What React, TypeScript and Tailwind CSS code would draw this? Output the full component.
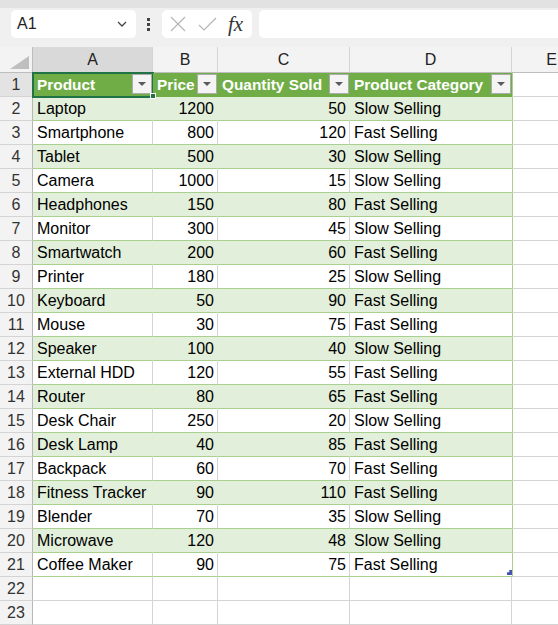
import { ReactNode } from 'react';

type Row = [string, number, number, string];

const rows: Row[] = [
    ['Laptop', 1200, 50, 'Slow Selling'],
    ['Smartphone', 800, 120, 'Fast Selling'],
    ['Tablet', 500, 30, 'Slow Selling'],
    ['Camera', 1000, 15, 'Slow Selling'],
    ['Headphones', 150, 80, 'Fast Selling'],
    ['Monitor', 300, 45, 'Slow Selling'],
    ['Smartwatch', 200, 60, 'Fast Selling'],
    ['Printer', 180, 25, 'Slow Selling'],
    ['Keyboard', 50, 90, 'Fast Selling'],
    ['Mouse', 30, 75, 'Fast Selling'],
    ['Speaker', 100, 40, 'Slow Selling'],
    ['External HDD', 120, 55, 'Fast Selling'],
    ['Router', 80, 65, 'Fast Selling'],
    ['Desk Chair', 250, 20, 'Slow Selling'],
    ['Desk Lamp', 40, 85, 'Fast Selling'],
    ['Backpack', 60, 70, 'Fast Selling'],
    ['Fitness Tracker', 90, 110, 'Fast Selling'],
    ['Blender', 70, 35, 'Slow Selling'],
    ['Microwave', 120, 48, 'Slow Selling'],
    ['Coffee Maker', 90, 75, 'Fast Selling'],
];

const FilterButton = () => (
    <div className="absolute right-[1px] top-[1px] flex h-[20px] w-[20px] items-center justify-center border border-[#ababab] bg-[#f4f4f4]">
        <div className="h-0 w-0 border-x-[4px] border-t-[4px] border-x-transparent border-t-[#5a5a5a]" />
    </div>
);

const RowHead = ({ n, selected }: { n: number; selected?: boolean }) => (
    <div
        className={`flex h-[24px] items-center justify-center border-b border-r border-b-[#d4d4d4] border-r-[#b8b8b8] text-[#333] ${
            selected ? 'bg-[#e3e3e3]' : 'bg-[#f3f3f3]'
        }`}
    >
        {n}
    </div>
);

const HeadCell = ({ children, first }: { children: ReactNode; first?: boolean }) => (
    <div className="relative flex h-[24px] items-center border-b border-b-[#70ad47] bg-[#70ad47] pl-[4px] text-[15.4px] font-bold text-white">
        {children}
        <FilterButton />
        {first && (
            <>
                <div className="pointer-events-none absolute -left-[1px] -top-[1px] h-[26px] w-[122px] border-2 border-[#217346]" />
                <div className="absolute -bottom-[3px] right-[-3px] z-10 h-[6px] w-[6px] border border-white bg-[#217346]" />
            </>
        )}
    </div>
);

const App = () => {
    const cols = ['A', 'B', 'C', 'D', 'E'];

    return (
        <div className="h-[625px] w-[558px] overflow-hidden bg-white font-['Liberation_Sans',Arial,sans-serif] text-[16px] text-black">
            {/* formula bar */}
            <div className="h-[8px] bg-[#e2e2e2]" />
            <div className="flex h-[39px] items-start bg-[#f0f0f0] pt-[2px]">
                <div className="ml-[11px] flex h-[28px] w-[125px] items-center justify-between rounded-[5px] bg-white pl-[6px] pr-[9px] text-[#222]">
                    <span>A1</span>
                    <svg width="10" height="6" viewBox="0 0 10 6">
                        <path d="M1 1l4 4 4-4" fill="none" stroke="#444" strokeWidth="1.3" />
                    </svg>
                </div>
                <div className="ml-[11px] flex h-[28px] flex-col items-center justify-center gap-[2px]">
                    <span className="h-[3px] w-[3px] bg-[#444]" />
                    <span className="h-[3px] w-[3px] bg-[#444]" />
                    <span className="h-[3px] w-[3px] bg-[#444]" />
                </div>
                <div className="ml-[12px] flex h-[28px] w-[90px] items-center rounded-[5px] bg-white pl-[8px]">
                    <svg width="16" height="16" viewBox="0 0 16 16">
                        <path d="M1 1l14 14M15 1L1 15" stroke="#b5b5b5" strokeWidth="1.2" />
                    </svg>
                    <svg className="ml-[12px]" width="19" height="15" viewBox="0 0 19 15">
                        <path d="M1 8l5 5L18 1" fill="none" stroke="#b5b5b5" strokeWidth="1.2" />
                    </svg>
                    <span className="ml-[11px] font-['Liberation_Serif',serif] text-[21px] italic leading-none text-[#333]">
                        fx
                    </span>
                </div>
                <div className="ml-[7px] h-[28px] flex-1 rounded-l-[5px] bg-white" />
            </div>

            {/* grid */}
            <div className="grid grid-cols-[33px_120px_65px_132px_162px_80px]">
                <div className="relative h-[26px] border-b border-r border-b-[#bdbdbd] border-r-[#bdbdbd] bg-[#f3f3f3]">
                    <div className="absolute bottom-[3px] right-[3px] h-0 w-0 border-b-[13px] border-l-[19px] border-b-[#bfbfbf] border-l-transparent" />
                </div>
                {cols.map((c, i) => (
                    <div
                        key={c}
                        className={`flex h-[26px] items-center justify-center border-b border-r border-b-[#bdbdbd] border-r-[#d4d4d4] text-[#222] ${
                            i === 0 ? 'bg-[#d9d9d9]' : 'bg-[#f3f3f3]'
                        }`}
                    >
                        {c}
                    </div>
                ))}

                <RowHead n={1} selected />
                <HeadCell first>Product</HeadCell>
                <HeadCell>Price</HeadCell>
                <HeadCell>Quantity Sold</HeadCell>
                <HeadCell>Product Category</HeadCell>
                <div className="h-[24px] border-b border-r border-[#d4d4d4] border-l border-l-[#a9d08e]" />

                {rows.map((r, i) => {
                    const band = i % 2 === 0;
                    const cell = `flex h-[24px] items-center border-b border-r border-b-[#a9d08e] ${
                        band ? 'bg-[#e2efda] border-r-[#e2efda]' : 'bg-white border-r-[#d4d4d4]'
                    }`;
                    return (
                        <div key={r[0]} className="contents">
                            <RowHead n={i + 2} />
                            <div className={`${cell} pl-[4px]`}>{r[0]}</div>
                            <div className={`${cell} justify-end pr-[3px]`}>{r[1]}</div>
                            <div className={`${cell} justify-end pr-[3px]`}>{r[2]}</div>
                            <div
                                className={`relative flex h-[24px] items-center border-b border-b-[#a9d08e] pl-[4px] ${
                                    band ? 'bg-[#e2efda]' : 'bg-white'
                                }`}
                            >
                                {r[3]}
                                {i === rows.length - 1 && (
                                    <div className="absolute bottom-[1px] right-0 h-[5px] w-[5px] bg-[#4454b4] [clip-path:polygon(100%_0,100%_100%,0_100%,0_45%,45%_45%,45%_0)]" />
                                )}
                            </div>
                            <div className="h-[24px] border-b border-r border-l border-b-[#d4d4d4] border-r-[#d4d4d4] border-l-[#a9d08e]" />
                        </div>
                    );
                })}

                {[22, 23].map((n) => (
                    <div key={n} className="contents">
                        <RowHead n={n} />
                        {cols.map((c) => (
                            <div key={c} className="h-[24px] border-b border-r border-[#d4d4d4]" />
                        ))}
                    </div>
                ))}
            </div>
        </div>
    );
};

export default App;
